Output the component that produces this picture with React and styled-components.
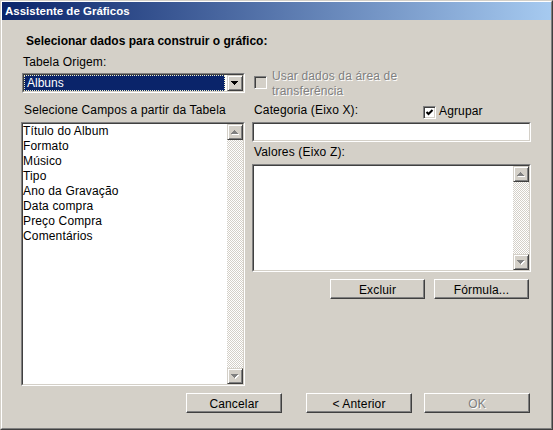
import styled, {createGlobalStyle} from 'styled-components';

const GlobalStyle = createGlobalStyle`
  html, body {
    margin: 0;
    padding: 0;
    background: #d4d0c8;
  }
  body {
    font-family: "Liberation Sans", Arial, sans-serif;
    font-size: 12px;
    color: #000;
  }
`;

const campos = [
  'Título do Album',
  'Formato',
  'Músico',
  'Tipo',
  'Ano da Gravação',
  'Data compra',
  'Preço Compra',
  'Comentários',
];

function Arrow({dir, disabled}) {
  const pts = dir === 'up' ? '3.5,0 7,4 0,4' : '0,0 7,0 3.5,4';
  return (
    <svg width="8" height="5" viewBox="0 0 8 5" shapeRendering="crispEdges">
      {disabled && <polygon points={pts} fill="#fff" transform="translate(1,1)" />}
      <polygon points={pts} fill={disabled ? '#808080' : '#000'} />
    </svg>
  );
}

function Scrollbar() {
  return (
    <ScrollCol>
      <ScrollButton>
        <Arrow dir="up" disabled />
      </ScrollButton>
      <Track />
      <ScrollButton>
        <Arrow dir="down" disabled />
      </ScrollButton>
    </ScrollCol>
  );
}

export default function App() {
  return (
    <>
      <GlobalStyle />
      <Window>
        <Frame>
          <TitleBar>Assistente de Gráficos</TitleBar>
          <Body>
            <Heading>Selecionar dados para construir o gráfico:</Heading>
            <Label indent={2} top={6}>Tabela Origem:</Label>

            <Columns top={3}>
              <Combo>
                <ComboInner>
                  <Selected>Albuns</Selected>
                  <ComboButton>
                    <Arrow dir="down" />
                  </ComboButton>
                </ComboInner>
              </Combo>
              <CheckGroup>
                <CheckBox disabled top={7} />
                <DisabledText>Usar dados da área de transferência</DisabledText>
              </CheckGroup>
            </Columns>

            <Columns top={10}>
              <Label indent={3}>Selecione Campos a partir da Tabela</Label>
              <LabelRow>
                <Label indent={2} width={169}>
                  Categoria (Eixo X):
                </Label>
                <AgruparCheck>
                  <CheckBox top={2}>
                    <svg width="9" height="9" viewBox="0 0 9 9">
                      <path d="M1.5 4 L3.5 6 L7.5 2" stroke="#000" strokeWidth="2" fill="none" />
                    </svg>
                  </CheckBox>
                  <span>Agrupar</span>
                </AgruparCheck>
              </LabelRow>
            </Columns>

            <Columns top={4}>
              <ListBox height={264}>
                <ListInner>
                  <Items>
                    {campos.map((c) => (
                      <Item key={c}>{c}</Item>
                    ))}
                  </Items>
                  <Scrollbar />
                </ListInner>
              </ListBox>

              <RightStack>
                <ListBox height={20}>
                  <ListInner />
                </ListBox>
                <Label indent={2} top={3}>
                  Valores (Eixo Z):
                </Label>
                <ListBox height={108} top={4}>
                  <ListInner>
                    <Items />
                    <Scrollbar />
                  </ListInner>
                </ListBox>
                <ButtonRow top={7} right={2}>
                  <Button width={95}>Excluir</Button>
                  <Button width={95} gap={9}>
                    Fórmula...
                  </Button>
                </ButtonRow>
              </RightStack>
            </Columns>

            <ButtonRow top={7} right={1}>
              <Button width={96}>Cancelar</Button>
              <Button width={106} gap={24}>
                &lt; Anterior
              </Button>
              <Button width={106} gap={12} disabled>
                OK
              </Button>
            </ButtonRow>
          </Body>
        </Frame>
      </Window>
    </>
  );
}

const Window = styled.div`
  width: 553px;
  height: 430px;
  box-sizing: border-box;
  background: #d4d0c8;
  border: 1px solid;
  border-color: #d4d0c8 #404040 #404040 #d4d0c8;
`;

const Frame = styled.div`
  height: 100%;
  box-sizing: border-box;
  border: 1px solid;
  border-color: #fff #808080 #808080 #fff;
  display: flex;
  flex-direction: column;
`;

const TitleBar = styled.div`
  height: 18px;
  display: flex;
  align-items: center;
  padding-left: 3px;
  background: linear-gradient(to right, #0a246a, #a6caf0);
  color: #fff;
  font-weight: bold;
  font-size: 11.5px;
`;

const Body = styled.div`
  flex: 1;
  padding: 14px 20px 0 19px;
  display: flex;
  flex-direction: column;
`;

const Heading = styled.div`
  font-weight: bold;
  line-height: 15px;
  margin-left: 5px;
`;

const Label = styled.div`
  line-height: 15px;
  white-space: nowrap;
  letter-spacing: 0.15px;
  margin-left: ${({indent}) => indent || 0}px;
  margin-top: ${({top}) => top || 0}px;
  ${({width}) => width && `width: ${width}px;`}
`;

const Columns = styled.div`
  display: grid;
  grid-template-columns: 224px 279px;
  column-gap: 7px;
  align-items: start;
  margin-top: ${({top}) => top || 0}px;
`;

const Combo = styled.div`
  height: 20px;
  box-sizing: border-box;
  margin-left: 1px;
  border: 1px solid;
  border-color: #808080 #fff #fff #808080;
`;

const ComboInner = styled.div`
  height: 100%;
  box-sizing: border-box;
  border: 1px solid;
  border-color: #404040 #d4d0c8 #d4d0c8 #404040;
  background: #fff;
  display: flex;
`;

const Selected = styled.div`
  flex: 1;
  margin-right: 2px;
  padding-left: 2px;
  background: #0a246a;
  border: 1px dotted #f0f0c8;
  color: #fff;
  line-height: 14px;
`;

const ScrollButton = styled.div`
  width: 16px;
  height: 16px;
  box-sizing: border-box;
  flex: none;
  display: flex;
  align-items: center;
  justify-content: center;
  background: #d4d0c8;
  border: 1px solid;
  border-color: #d4d0c8 #404040 #404040 #d4d0c8;
  box-shadow: inset 1px 1px #fff, inset -1px -1px #808080;
`;

const ComboButton = styled(ScrollButton)``;

const CheckGroup = styled.div`
  display: flex;
  align-items: flex-start;
  margin: -4px 0 -10px;
  padding-left: 2px;
`;

const CheckBox = styled.div`
  width: 13px;
  height: 13px;
  box-sizing: border-box;
  flex: none;
  display: flex;
  align-items: center;
  justify-content: center;
  margin-top: ${({top}) => top || 0}px;
  background: ${({disabled}) => (disabled ? '#d4d0c8' : '#fff')};
  border: 1px solid;
  border-color: #808080 #fff #fff #808080;
  box-shadow: inset 1px 1px #404040, inset -1px -1px #d4d0c8;
`;

const DisabledText = styled.div`
  width: 132px;
  margin-left: 5px;
  line-height: 14.5px;
  letter-spacing: 0.15px;
  color: #808080;
  text-shadow: 1px 1px 0 #fff;
`;

const LabelRow = styled.div`
  display: flex;
  align-items: flex-start;
`;

const AgruparCheck = styled.div`
  display: flex;
  align-items: flex-start;
  gap: 3px;
  line-height: 15px;
  letter-spacing: 0.15px;
  margin: 1px 0 -5px;
`;

const ListBox = styled.div`
  height: ${({height}) => height}px;
  margin-top: ${({top}) => top || 0}px;
  box-sizing: border-box;
  border: 1px solid;
  border-color: #808080 #fff #fff #808080;
`;

const ListInner = styled.div`
  height: 100%;
  box-sizing: border-box;
  border: 1px solid;
  border-color: #404040 #d4d0c8 #d4d0c8 #404040;
  background: #fff;
  display: flex;
`;

const Items = styled.div`
  flex: 1;
`;

const Item = styled.div`
  line-height: 15px;
  white-space: nowrap;
  letter-spacing: 0.15px;
`;

const ScrollCol = styled.div`
  width: 16px;
  display: flex;
  flex-direction: column;
`;

const Track = styled.div`
  flex: 1;
  background: repeating-conic-gradient(#d4d0c8 0 25%, #fff 0 50%) 0 0 / 2px 2px;
`;

const RightStack = styled.div`
  display: flex;
  flex-direction: column;
`;

const ButtonRow = styled.div`
  display: flex;
  justify-content: flex-end;
  margin-top: ${({top}) => top || 0}px;
  padding-right: ${({right}) => right || 0}px;
`;

const Button = styled.button`
  width: ${({width}) => width}px;
  height: 20px;
  margin: 0 0 0 ${({gap}) => gap || 0}px;
  padding: 1px 0 0;
  box-sizing: border-box;
  background: #d4d0c8;
  border: 1px solid;
  border-color: #fff #404040 #404040 #fff;
  box-shadow: inset -1px -1px #808080;
  font-family: "Liberation Sans", Arial, sans-serif;
  font-size: 12px;
  letter-spacing: 0.15px;
  color: #000;
  &:disabled {
    color: #808080;
    text-shadow: 1px 1px 0 #fff;
  }
`;
